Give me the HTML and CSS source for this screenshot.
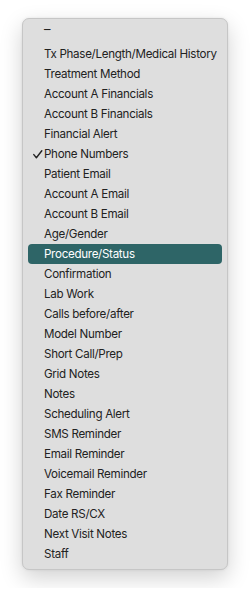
FILE: index.html
```html
<!DOCTYPE html>
<html lang="en">
<head>
    <meta charset="UTF-8">
    <title>Column Menu</title>
    <link rel="stylesheet" href="styles.css">
</head>
<body>
    <div class="menu">
        <div class="item dash"><span class="mark"></span>–</div>
        <div class="item"><span class="mark"></span>Tx Phase/Length/Medical History</div>
        <div class="item"><span class="mark"></span>Treatment Method</div>
        <div class="item"><span class="mark"></span>Account A Financials</div>
        <div class="item"><span class="mark"></span>Account B Financials</div>
        <div class="item"><span class="mark"></span>Financial Alert</div>
        <div class="item"><span class="mark"><svg width="10" height="9" viewBox="0 0 10 9"><path d="M0.8 4.6 L3.4 7.8 L8.8 0.8" fill="none" stroke="#222222" stroke-width="1.4" stroke-linecap="round" stroke-linejoin="round"/></svg></span>Phone Numbers</div>
        <div class="item"><span class="mark"></span>Patient Email</div>
        <div class="item"><span class="mark"></span>Account A Email</div>
        <div class="item"><span class="mark"></span>Account B Email</div>
        <div class="item"><span class="mark"></span>Age/Gender</div>
        <div class="item selected"><span class="mark"></span>Procedure/Status</div>
        <div class="item"><span class="mark"></span>Confirmation</div>
        <div class="item"><span class="mark"></span>Lab Work</div>
        <div class="item"><span class="mark"></span>Calls before/after</div>
        <div class="item"><span class="mark"></span>Model Number</div>
        <div class="item"><span class="mark"></span>Short Call/Prep</div>
        <div class="item"><span class="mark"></span>Grid Notes</div>
        <div class="item"><span class="mark"></span>Notes</div>
        <div class="item"><span class="mark"></span>Scheduling Alert</div>
        <div class="item"><span class="mark"></span>SMS Reminder</div>
        <div class="item"><span class="mark"></span>Email Reminder</div>
        <div class="item"><span class="mark"></span>Voicemail Reminder</div>
        <div class="item"><span class="mark"></span>Fax Reminder</div>
        <div class="item"><span class="mark"></span>Date RS/CX</div>
        <div class="item"><span class="mark"></span>Next Visit Notes</div>
        <div class="item"><span class="mark"></span>Staff</div>
    </div>
</body>
</html>
```
FILE: styles.css
```css
body {
    margin: 0;
    padding: 18px 22px;
    background: #ffffff;
    font-family: Inter, "Noto Sans", sans-serif;
    font-size: 11.6px;
    letter-spacing: -0.3px;
    color: #222222;
}
.menu {
    width: 194px;
    background-color: #dedede;
    border: 1px solid #c6c6c6;
    border-radius: 7px;
    padding: 5px;
    overflow: hidden;
    box-shadow: 0 8px 22px rgba(0,0,0,0.18), 0 0 3px rgba(0,0,0,0.08);
}
.item {
    display: flex;
    align-items: center;
    height: 20px;
    line-height: 21px;
    border-radius: 4px;
    white-space: nowrap;
}
.mark {
    width: 16px;
    flex: none;
    display: flex;
    align-items: center;
    padding-left: 5px;
    box-sizing: border-box;
}
.dash {
    margin-top: -5px;
    margin-bottom: 5px;
    font-size: 13px;
}
.selected {
    background-color: #2e6567;
    color: #ffffff;
}
```
